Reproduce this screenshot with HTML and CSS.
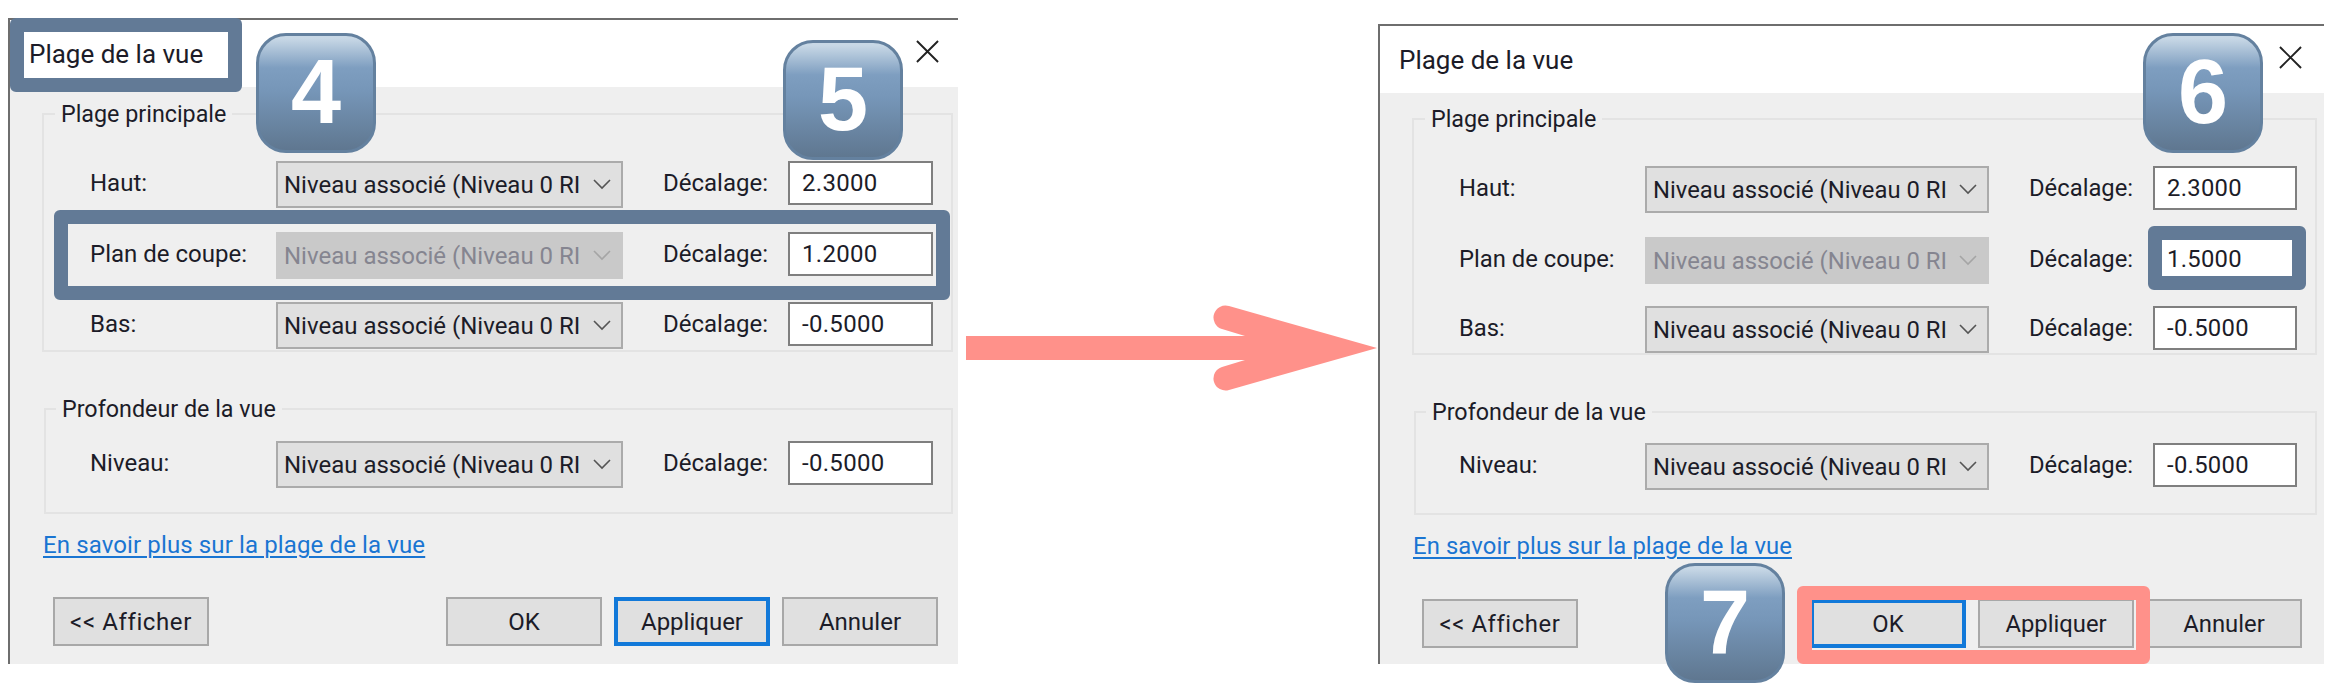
FILE: index.html
```html
<!DOCTYPE html>
<html lang="fr">
<head>
    <meta charset="UTF-8">
    <meta name="viewport" content="width=device-width, initial-scale=1.0">
    <title>Plage de la vue</title>
    <link rel="stylesheet" href="styles.css">
</head>
<body>
    <section class="dialog dialog--before">
        <header class="title-bar">
            <span class="title">Plage de la vue</span>
            <svg class="close" viewBox="0 0 24 24"><path d="M1 1 23 23M23 1 1 23"/></svg>
        </header>
        <div class="dialog-body">
            <fieldset class="group group--main">
                <legend>Plage principale</legend>
                <div class="row">
                    <span class="row-label">Haut:</span>
                    <div class="select"><span class="select-text">Niveau associé (Niveau 0 RI</span><svg class="chevron" viewBox="0 0 18 11"><path d="M1 1 9 9 17 1"/></svg></div>
                    <span class="offset-label">Décalage:</span>
                    <div class="number">2.3000</div>
                </div>
                <div class="row row--cut">
                    <span class="row-label">Plan de coupe:</span>
                    <div class="select select--off"><span class="select-text">Niveau associé (Niveau 0 RI</span><svg class="chevron" viewBox="0 0 18 11"><path d="M1 1 9 9 17 1"/></svg></div>
                    <span class="offset-label">Décalage:</span>
                    <div class="number">1.2000</div>
                </div>
                <div class="row">
                    <span class="row-label">Bas:</span>
                    <div class="select"><span class="select-text">Niveau associé (Niveau 0 RI</span><svg class="chevron" viewBox="0 0 18 11"><path d="M1 1 9 9 17 1"/></svg></div>
                    <span class="offset-label">Décalage:</span>
                    <div class="number">-0.5000</div>
                </div>
            </fieldset>
            <fieldset class="group group--depth">
                <legend>Profondeur de la vue</legend>
                <div class="row">
                    <span class="row-label">Niveau:</span>
                    <div class="select"><span class="select-text">Niveau associé (Niveau 0 RI</span><svg class="chevron" viewBox="0 0 18 11"><path d="M1 1 9 9 17 1"/></svg></div>
                    <span class="offset-label">Décalage:</span>
                    <div class="number">-0.5000</div>
                </div>
            </fieldset>
            <a class="help-link" href="#">En savoir plus sur la plage de la vue</a>
            <div class="buttons">
                <button class="btn btn--show" type="button">&lt;&lt; Afficher</button>
                <button class="btn" type="button">OK</button>
                <button class="btn btn--default" type="button">Appliquer</button>
                <button class="btn" type="button">Annuler</button>
            </div>
        </div>
        <span class="mark mark--title"></span>
        <span class="mark mark--plan"></span>
        <span class="badge badge--4">4</span>
        <span class="badge badge--5">5</span>
    </section>

    <svg class="arrow" viewBox="0 0 420 100"><path d="M8 38H287L264 31A12 12 0 0 1 271 8L419 50 271 92A12 12 0 0 1 264 69L287 62H8Z"/></svg>

    <section class="dialog dialog--after">
        <header class="title-bar">
            <span class="title">Plage de la vue</span>
            <svg class="close" viewBox="0 0 24 24"><path d="M1 1 23 23M23 1 1 23"/></svg>
        </header>
        <div class="dialog-body">
            <fieldset class="group group--main">
                <legend>Plage principale</legend>
                <div class="row">
                    <span class="row-label">Haut:</span>
                    <div class="select"><span class="select-text">Niveau associé (Niveau 0 RI</span><svg class="chevron" viewBox="0 0 18 11"><path d="M1 1 9 9 17 1"/></svg></div>
                    <span class="offset-label">Décalage:</span>
                    <div class="number">2.3000</div>
                </div>
                <div class="row row--cut">
                    <span class="row-label">Plan de coupe:</span>
                    <div class="select select--off"><span class="select-text">Niveau associé (Niveau 0 RI</span><svg class="chevron" viewBox="0 0 18 11"><path d="M1 1 9 9 17 1"/></svg></div>
                    <span class="offset-label">Décalage:</span>
                    <div class="number">1.5000</div>
                </div>
                <div class="row">
                    <span class="row-label">Bas:</span>
                    <div class="select"><span class="select-text">Niveau associé (Niveau 0 RI</span><svg class="chevron" viewBox="0 0 18 11"><path d="M1 1 9 9 17 1"/></svg></div>
                    <span class="offset-label">Décalage:</span>
                    <div class="number">-0.5000</div>
                </div>
            </fieldset>
            <fieldset class="group group--depth">
                <legend>Profondeur de la vue</legend>
                <div class="row">
                    <span class="row-label">Niveau:</span>
                    <div class="select"><span class="select-text">Niveau associé (Niveau 0 RI</span><svg class="chevron" viewBox="0 0 18 11"><path d="M1 1 9 9 17 1"/></svg></div>
                    <span class="offset-label">Décalage:</span>
                    <div class="number">-0.5000</div>
                </div>
            </fieldset>
            <a class="help-link" href="#">En savoir plus sur la plage de la vue</a>
            <div class="buttons">
                <button class="btn btn--show" type="button">&lt;&lt; Afficher</button>
                <button class="btn btn--default" type="button">OK</button>
                <button class="btn" type="button">Appliquer</button>
                <button class="btn" type="button">Annuler</button>
            </div>
        </div>
        <span class="mark mark--offset"></span>
        <span class="mark mark--buttons"></span>
        <span class="badge badge--6">6</span>
        <span class="badge badge--7">7</span>
    </section>
</body>
</html>
```

FILE: styles.css
```css
* {
    box-sizing: border-box;
}

body {
    margin: 0;
    height: 694px;
    padding-left: 8px;
    display: flex;
    align-items: flex-start;
    overflow: hidden;
    background-color: #fff;
    font-family: Roboto, 'Liberation Sans', sans-serif;
    font-size: 24px;
    color: #1c1c28;
}

.dialog {
    position: relative;
    flex: none;
    border-left: 2px solid #6e6e6e;
    border-top: 2px solid #6e6e6e;
}

.dialog--before {
    width: 950px;
    margin-top: 18px;
    --label-col: 186px;
    --select-col: 347px;
    --offset-col: 165px;
    --number-col: 145px;
    --row-pad: 46px;
}

.dialog--after {
    width: 946px;
    margin-top: 24px;
    font-size: 23.8px;
    --label-col: 186px;
    --select-col: 344px;
    --offset-col: 164px;
    --number-col: 144px;
    --row-pad: 45px;
}

.arrow {
    flex: none;
    width: 420px;
    height: 100px;
    margin-top: 298px;
    fill: #ff918a;
}

/* title bar */
.title-bar {
    height: 67px;
    padding: 0 19px 0 19px;
    display: flex;
    align-items: center;
    justify-content: space-between;
    background-color: #fff;
}

.dialog--after .title-bar {
    padding-right: 22px;
}

.title {
    font-size: 26px;
}

.close {
    width: 23px;
    height: 23px;
    margin-top: -4px;
    fill: none;
    stroke: #222;
    stroke-width: 2;
}

.dialog-body {
    height: 577px;
    padding-top: 15px;
    background-color: #efefef;
}

.dialog--after .dialog-body {
    height: 571px;
    padding-top: 14px;
}

/* groups */
.group {
    margin: 0 5px 0 32px;
    min-width: 0;
    padding: 35px 0 0 var(--row-pad);
    border: 2px solid #e3e3e3;
}

.dialog--after .group {
    margin-right: 7px;
}

.group legend {
    margin-left: calc(11px - var(--row-pad));
    padding: 0 6px;
    height: 24px;
    font-size: 23.3px;
    line-height: 24px;
}

.group--main {
    height: 250px;
}

.dialog--after .group--main {
    height: 248px;
}

.group--depth {
    height: 117px;
    margin-top: 45px;
    margin-left: 34px;
    padding-top: 20px;
    padding-left: calc(var(--row-pad) - 2px);
}

.group--depth legend {
    margin-left: calc(12px - var(--row-pad));
}

.dialog--after .group--depth {
    height: 115px;
    padding-top: 19px;
}

.row {
    height: 47px;
    margin-bottom: 23px;
    display: grid;
    grid-template-columns: var(--label-col) var(--select-col) var(--offset-col) var(--number-col);
    align-items: start;
}

.row--cut {
    margin-top: 24px;
}

.dialog--after .row--cut {
    margin-bottom: 22px;
}

.row-label,
.offset-label {
    line-height: 44px;
}

.offset-label {
    padding-left: 40px;
}

.select {
    height: 47px;
    padding: 0 10px 0 6px;
    display: flex;
    align-items: center;
    justify-content: space-between;
    background-color: #e0e0e0;
    border: 2px solid #ababab;
}

.select-text {
    white-space: nowrap;
}

.chevron {
    width: 18px;
    height: 11px;
    fill: none;
    stroke: #555;
    stroke-width: 1.6;
}

.select--off {
    background-color: #c9c9c9;
    border-color: #c9c9c9;
    color: #858590;
}

.select--off .chevron {
    stroke: #a5a5a5;
}

.number {
    height: 44px;
    padding-left: 12px;
    line-height: 40px;
    letter-spacing: 0.3px;
    background-color: #fff;
    border: 2px solid #7f7f7f;
}

.help-link {
    display: block;
    width: max-content;
    height: 30px;
    margin: 17px 0 0 33px;
    line-height: 28px;
    letter-spacing: 0.12px;
    color: #1a75d2;
    text-decoration: underline;
    text-decoration-thickness: 2px;
    text-underline-offset: 3px;
}

/* buttons */
.buttons {
    margin-top: 36px;
    padding: 0 20px 0 43px;
    display: flex;
    gap: 12px;
}

.dialog--after .buttons {
    padding: 0 22px 0 42px;
    margin-top: 37px;
}

.btn {
    width: 156px;
    height: 49px;
    padding: 0;
    font: inherit;
    color: inherit;
    background-color: #e0e0e0;
    border: 2px solid #a8a8a8;
    border-radius: 0;
}

.btn--show {
    margin-right: auto;
    letter-spacing: 0.6px;
}

.btn--default {
    border: 4px solid #1279d9;
}

/* callouts */
.mark {
    position: absolute;
    border: 14px solid #627a96;
    border-radius: 6px;
}

.mark--title {
    left: 0;
    top: -2px;
    width: 232px;
    height: 74px;
}

.mark--plan {
    left: 44px;
    top: 190px;
    width: 896px;
    height: 90px;
}

.mark--offset {
    left: 768px;
    top: 200px;
    width: 158px;
    height: 64px;
}

.mark--buttons {
    left: 417px;
    top: 560px;
    width: 353px;
    height: 78px;
    border-color: #ff918a;
    border-left-width: 15px;
}

.badge {
    position: absolute;
    width: 120px;
    height: 120px;
    padding-bottom: 3px;
    display: flex;
    align-items: center;
    justify-content: center;
    border: 3px solid #64819f;
    border-radius: 30px;
    background: linear-gradient(#c8d8e6 2%, #7e9ec0 28%, #7696b8 48%, #5f7790 100%);
    font-family: 'Liberation Sans', Arial, sans-serif;
    font-weight: bold;
    font-size: 90px;
    line-height: 1;
    color: #fff;
}

.badge--4 {
    left: 246px;
    top: 13px;
}

.badge--5 {
    left: 773px;
    top: 20px;
}

.badge--6 {
    left: 763px;
    top: 7px;
}

.badge--7 {
    left: 285px;
    top: 537px;
}
```
